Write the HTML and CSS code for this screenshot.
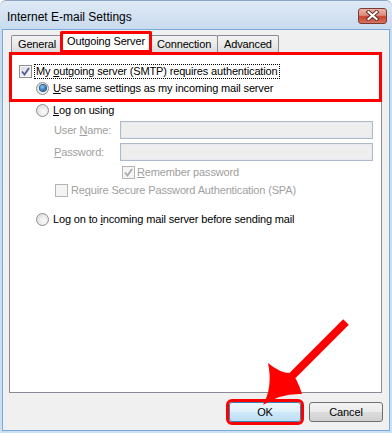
FILE: index.html
```html
<!DOCTYPE html>
<html lang="en">
<head>
    <meta charset="UTF-8">
    <title>Internet E-mail Settings</title>
    <link rel="stylesheet" href="styles.css">
</head>
<body>
    <div class="window">
        <div class="titlebar">
            <span class="title">Internet E-mail Settings</span>
            <span class="close-btn">
                <svg width="15" height="11" viewBox="0 0 15 11">
                    <path d="M3.5 2 L11.5 9 M11.5 2 L3.5 9" stroke="#5a2c26" stroke-width="4" stroke-linecap="square"/>
                    <path d="M3.5 2 L11.5 9 M11.5 2 L3.5 9" stroke="#fff" stroke-width="2.2" stroke-linecap="square"/>
                </svg>
            </span>
        </div>

        <div class="client">
            <div class="tabs">
                <div class="tab">General</div>
                <div class="tab active">Outgoing Server</div>
                <div class="tab">Connection</div>
                <div class="tab">Advanced</div>
            </div>

            <div class="panel">
                <div class="mark-box"></div>

                <div class="row row-auth">
                    <span class="check checked">
                        <svg width="9" height="9" viewBox="0 0 9 9"><path d="M1 4.5 L3.5 7.5 L8 1" fill="none" stroke="#4a5e9c" stroke-width="1.8"/></svg>
                    </span>
                    <span class="focus">My <u>o</u>utgoing server (SMTP) requires authentication</span>
                </div>

                <div class="row row-radio row-same">
                    <span class="radio on"></span>
                    <span><u>U</u>se same settings as my incoming mail server</span>
                </div>

                <div class="row row-radio row-logon">
                    <span class="radio"></span>
                    <span><u>L</u>og on using</span>
                </div>

                <div class="row row-field row-user disabled">
                    <span class="field-label">User <u>N</u>ame:</span>
                    <span class="field"></span>
                </div>

                <div class="row row-field row-pass disabled">
                    <span class="field-label"><u>P</u>assword:</span>
                    <span class="field"></span>
                </div>

                <div class="row row-remember disabled">
                    <span class="check checked dim">
                        <svg width="9" height="9" viewBox="0 0 9 9"><path d="M1 4.5 L3.5 7.5 L8 1" fill="none" stroke="#a9a9a9" stroke-width="1.8"/></svg>
                    </span>
                    <span><u>R</u>emember password</span>
                </div>

                <div class="row row-spa disabled">
                    <span class="check dim"></span>
                    <span>Re<u>q</u>uire Secure Password Authentication (SPA)</span>
                </div>

                <div class="row row-radio row-before">
                    <span class="radio"></span>
                    <span>Log on to <u>i</u>ncoming mail server before sending mail</span>
                </div>
            </div>

            <div class="buttons">
                <span class="btn default">OK</span>
                <span class="btn">Cancel</span>
            </div>
        </div>

        <!-- annotation arrow pointing at OK -->
        <svg class="arrow" width="392" height="433" viewBox="0 0 392 433">
            <path d="M346 321 L284 383" stroke="#ff0000" stroke-width="8"/>
            <path d="M268 362 Q280 372 290 372 L296 378 Q300 386 302 393 Q281 392 263 404 Q273 386 268 362 Z" fill="#ff0000"/>
        </svg>
    </div>
</body>
</html>
```

FILE: styles.css
```css
body {
    margin: 0;
    font-family: "Liberation Sans", Arial, sans-serif;
    font-size: 11px;
    letter-spacing: -0.15px;
    color: #000;
}
u {
    text-decoration-thickness: 1px;
    text-underline-offset: 1px;
}
.window {
    position: relative;
    width: 392px;
    height: 433px;
    box-sizing: border-box;
    padding: 0 2px 2px 2px;
    background: linear-gradient(#dfe9f5, #c9dbef 28px, #cddff2);
    border-radius: 6px 6px 0 0;
    border-top: 1px solid #8ea6c2;
    display: flex;
    flex-direction: column;
}
.titlebar {
    height: 28px;
    display: flex;
    align-items: center;
    justify-content: space-between;
    padding: 0 3px 0 5px;
}
.title {
    font-size: 12px;
    letter-spacing: 0;
    padding-top: 3px;
}
.close-btn {
    width: 27px;
    height: 14px;
    margin-top: 1px;
    border: 1px solid #763d35;
    border-radius: 3px;
    background: linear-gradient(#eeb3a6, #dd8c7b 45%, #c9432c 55%, #d9735e);
    display: flex;
    align-items: center;
    justify-content: center;
}
.client {
    flex: 1;
    background: #f0f0f0;
    border: 1px solid #7aaad8;
    padding-top: 2px;
}
.tabs {
    display: flex;
    align-items: flex-end;
    height: 20px;
    margin-left: 8px;
}
.tab {
    height: 16px;
    line-height: 16px;
    padding: 0 6px;
    border: 1px solid #898c95;
    border-bottom: none;
    border-radius: 2px 2px 0 0;
    background: linear-gradient(#f3f3f3, #ebebeb 50%, #dcdcdc);
    margin-right: -1px;
}
.tab.active {
    position: relative;
    z-index: 2;
    height: 21px;
    line-height: 19px;
    margin: 0 -2px -1px -2px;
    padding: 0 6px;
    background: #fff;
    outline: 3px solid #ff0000;
    outline-offset: -3px;
}
.panel {
    position: relative;
    margin-left: 6px;
    width: 373px;
    height: 341px;
    box-sizing: border-box;
    background: #fff;
    border: 1px solid #898c95;
    padding-top: 10px;
}
.mark-box {
    position: absolute;
    left: -1px;
    top: -1px;
    width: 373px;
    height: 50px;
    box-sizing: border-box;
    border: 3px solid #ff0000;
    z-index: 3;
}
.row {
    display: flex;
    align-items: center;
    height: 16px;
}
.row-auth {
    padding-left: 9px;
    gap: 2px;
}
.focus {
    border: 1px dotted #000;
    padding: 0 1px;
    line-height: 13px;
}
.row-radio {
    padding-left: 26px;
    gap: 4px;
}
.row-same { margin-top: 1px; }
.row-logon { margin-top: 6px; }
.row-before { margin-top: 13px; }
.row-field {
    height: 19px;
    padding-left: 44px;
}
.row-user { margin-top: 2px; }
.row-pass { margin-top: 3px; }
.field-label {
    width: 66px;
}
.field {
    width: 253px;
    height: 18px;
    box-sizing: border-box;
    border: 1px solid #adbac9;
    box-shadow: inset 0 0 0 1px #e4e9ef;
    background: #eeeeee;
}
.row-remember {
    margin-top: 3px;
    padding-left: 112px;
    gap: 2px;
}
.row-spa {
    margin-top: 2px;
    padding-left: 45px;
    gap: 3px;
}
.disabled {
    color: #a0a0a0;
}
.check {
    width: 13px;
    height: 13px;
    box-sizing: border-box;
    border: 1px solid #8e8f8f;
    background: linear-gradient(135deg, #dcdcdc, #f8f8f8);
    box-shadow: inset 0 0 0 1px #f4f4f4;
    display: flex;
    align-items: center;
    justify-content: center;
}
.check.dim {
    border-color: #b5b5b5;
    background: #f4f4f4;
}
.radio {
    width: 13px;
    height: 13px;
    box-sizing: border-box;
    border: 1px solid #8e8f8f;
    border-radius: 50%;
    background: radial-gradient(circle at 60% 60%, #fdfdfd, #d5d5d5);
    display: flex;
    align-items: center;
    justify-content: center;
}
.radio.on::after {
    content: "";
    width: 6px;
    height: 6px;
    border-radius: 50%;
    background: radial-gradient(circle at 40% 35%, #8ed0f8, #1b5fa8 70%);
    box-shadow: 0 0 0 1px #2c5d8c;
}
.buttons {
    display: flex;
    justify-content: flex-end;
    gap: 8px;
    padding-right: 6px;
    margin-top: 9px;
}
.btn {
    width: 72px;
    height: 20px;
    box-sizing: border-box;
    border: 1px solid #707070;
    border-radius: 3px;
    background: linear-gradient(#f2f2f2, #ebebeb 48%, #dddddd 52%, #cfcfcf);
    display: flex;
    align-items: center;
    justify-content: center;
}
.btn + .btn {
    width: 74px;
}
.btn.default {
    border-color: #3c7fb1;
    background: linear-gradient(#eef7fd, #e0f1fb 48%, #cde9f9 52%, #bcdff3);
    outline: 3px solid #ff0000;
    outline-offset: 0;
}
.arrow {
    position: absolute;
    left: 0;
    top: 0;
    pointer-events: none;
    z-index: 5;
}
```
